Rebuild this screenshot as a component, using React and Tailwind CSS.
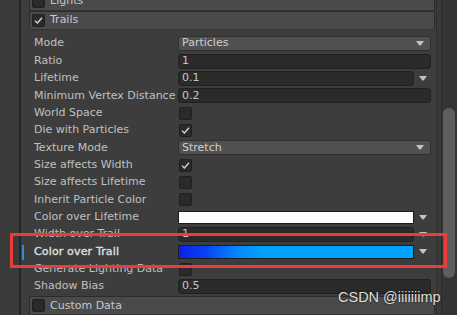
import React from "react";

function Check({ size = 11 }) {
  return (
    <svg width={size} height={size} viewBox="0 0 11 11">
      <path d="M2 5.6 L4.4 8 L9 2.8" fill="none" stroke="#d8d8d8" strokeWidth="1.3" />
    </svg>
  );
}

function Box({ checked }) {
  return (
    <div className="w-[13px] h-[13px] shrink-0 rounded-[2px] bg-[#2a2a2a] border border-[#1f1f1f] flex items-center justify-center">
      {checked && <Check />}
    </div>
  );
}

function Arrow() {
  return (
    <svg width="8" height="5" viewBox="0 0 8 5">
      <path d="M0 0 H8 L4.6 4.6 H3.4 Z" fill="#c2c2c2" />
    </svg>
  );
}

function Header({ label, checked, first }) {
  return (
    <div
      className={`${first ? "mt-[-8px]" : ""} ml-[8px] mr-[1px] h-[19px] shrink-0 flex items-center pl-[2px] gap-[5px] bg-[#4a4a4a] border-t border-l border-r border-[#2c2c2c] border-b border-b-[#333333] rounded-[2px]`}
    >
      <Box checked={checked} />
      <span className="text-[11px] text-[#c8c8c8] whitespace-nowrap">{label}</span>
    </div>
  );
}

function Row({ label, bold, marker, children }) {
  return (
    <div className="relative flex items-center h-[17.36px] shrink-0 pl-[13px] pr-[5px]">
      {marker && <div className="absolute left-[1px] top-[1.4px] w-[2px] h-[15px] bg-[#2b8ce0]" />}
      <div
        className={`w-[144px] shrink-0 whitespace-nowrap text-[11px] ${bold ? "text-[#dadada] tracking-[0.15px] [-webkit-text-stroke:0.45px_#dadada]" : "text-[#c0c0c0]"}`}
      >
        {label}
      </div>
      <div className="flex-1 min-w-0 flex items-center">{children}</div>
    </div>
  );
}

function Dropdown({ value }) {
  return (
    <div className="flex-1 h-[15px] rounded-[3px] bg-[#515151] border border-[#303030] flex items-center pl-[3px] pr-[6px]">
      <span className="flex-1 text-[11px] text-[#cfcfcf] whitespace-nowrap">{value}</span>
      <Arrow />
    </div>
  );
}

function TextField({ value }) {
  return (
    <div className="flex-1 h-[15px] rounded-[3px] bg-[#2a2a2a] border border-[#212121] flex items-center pl-[3px]">
      <span className="text-[11px] text-[#c6c6c6] whitespace-nowrap">{value}</span>
    </div>
  );
}

function Curve({ children }) {
  return (
    <>
      {children}
      <div className="w-[17px] shrink-0 flex justify-center">
        <Arrow />
      </div>
    </>
  );
}

export default function App() {
  return (
    <div className="relative w-[457px] h-[315px] overflow-hidden flex bg-[#3a3a3a] [font-family:'DejaVu_Sans',sans-serif]">
      <div className="w-[19px] shrink-0 bg-[#3a3a3a]" />
      <div className="w-[2px] shrink-0 bg-[#262626]" />
      <div className="w-[415px] shrink-0 bg-[#3d3d3d] flex flex-col">
        <Header label="Lights" first />
        <Header label="Trails" checked />
        <div className="h-[5px] shrink-0" />
        <Row label="Mode">
          <Dropdown value="Particles" />
        </Row>
        <Row label="Ratio">
          <TextField value="1" />
        </Row>
        <Row label="Lifetime">
          <Curve>
            <TextField value="0.1" />
          </Curve>
        </Row>
        <Row label="Minimum Vertex Distance">
          <TextField value="0.2" />
        </Row>
        <Row label="World Space">
          <div className="pl-[1px]"><Box /></div>
        </Row>
        <Row label="Die with Particles">
          <div className="pl-[1px]"><Box checked /></div>
        </Row>
        <Row label="Texture Mode">
          <Dropdown value="Stretch" />
        </Row>
        <Row label="Size affects Width">
          <div className="pl-[1px]"><Box checked /></div>
        </Row>
        <Row label="Size affects Lifetime">
          <div className="pl-[1px]"><Box /></div>
        </Row>
        <Row label="Inherit Particle Color">
          <div className="pl-[1px]"><Box /></div>
        </Row>
        <Row label="Color over Lifetime">
          <Curve>
            <div className="flex-1 h-[13px] bg-white border border-[#1c1c1c]" />
          </Curve>
        </Row>
        <Row label="Width over Trail">
          <Curve>
            <TextField value="1" />
          </Curve>
        </Row>
        <Row label="Color over Trail" bold marker>
          <Curve>
            <div className="flex-1 h-[14px] border border-[#1c1c1c] bg-[linear-gradient(to_right,#0b1fe8_0%,#0846f5_12%,#0488fd_25%,#00a3ff_36%,#00a3ff_100%)]" />
          </Curve>
        </Row>
        <Row label="Generate Lighting Data">
          <div className="pl-[1px]"><Box /></div>
        </Row>
        <Row label="Shadow Bias">
          <TextField value="0.5" />
        </Row>
        <div className="h-[1px] shrink-0" />
        <Header label="Custom Data" />
      </div>
      <div className="w-[1px] shrink-0 bg-[#2e2e2e]" />
      <div className="w-[4px] shrink-0 bg-[#393939]" />
      <div className="w-[1px] shrink-0 bg-[#2c2c2c]" />
      <div className="flex-1 bg-[#343434] flex flex-col">
        <div className="mt-[108px] ml-[1px] w-[12px] h-[170px] rounded-[6px] bg-[#5e5e5e]" />
      </div>

      <div className="absolute left-[10px] top-[233px] w-[437px] h-[35px] border-[3px] border-[#ec3b3b]" />
      <div className="absolute left-[338px] top-[289px] text-[14.5px] leading-[16px] text-[#dedede] whitespace-nowrap [font-family:'Liberation_Sans',Arial,sans-serif] [text-shadow:0_0_2px_rgba(0,0,0,0.7)]">
        CSDN @iiiiiiimp
      </div>
    </div>
  );
}
